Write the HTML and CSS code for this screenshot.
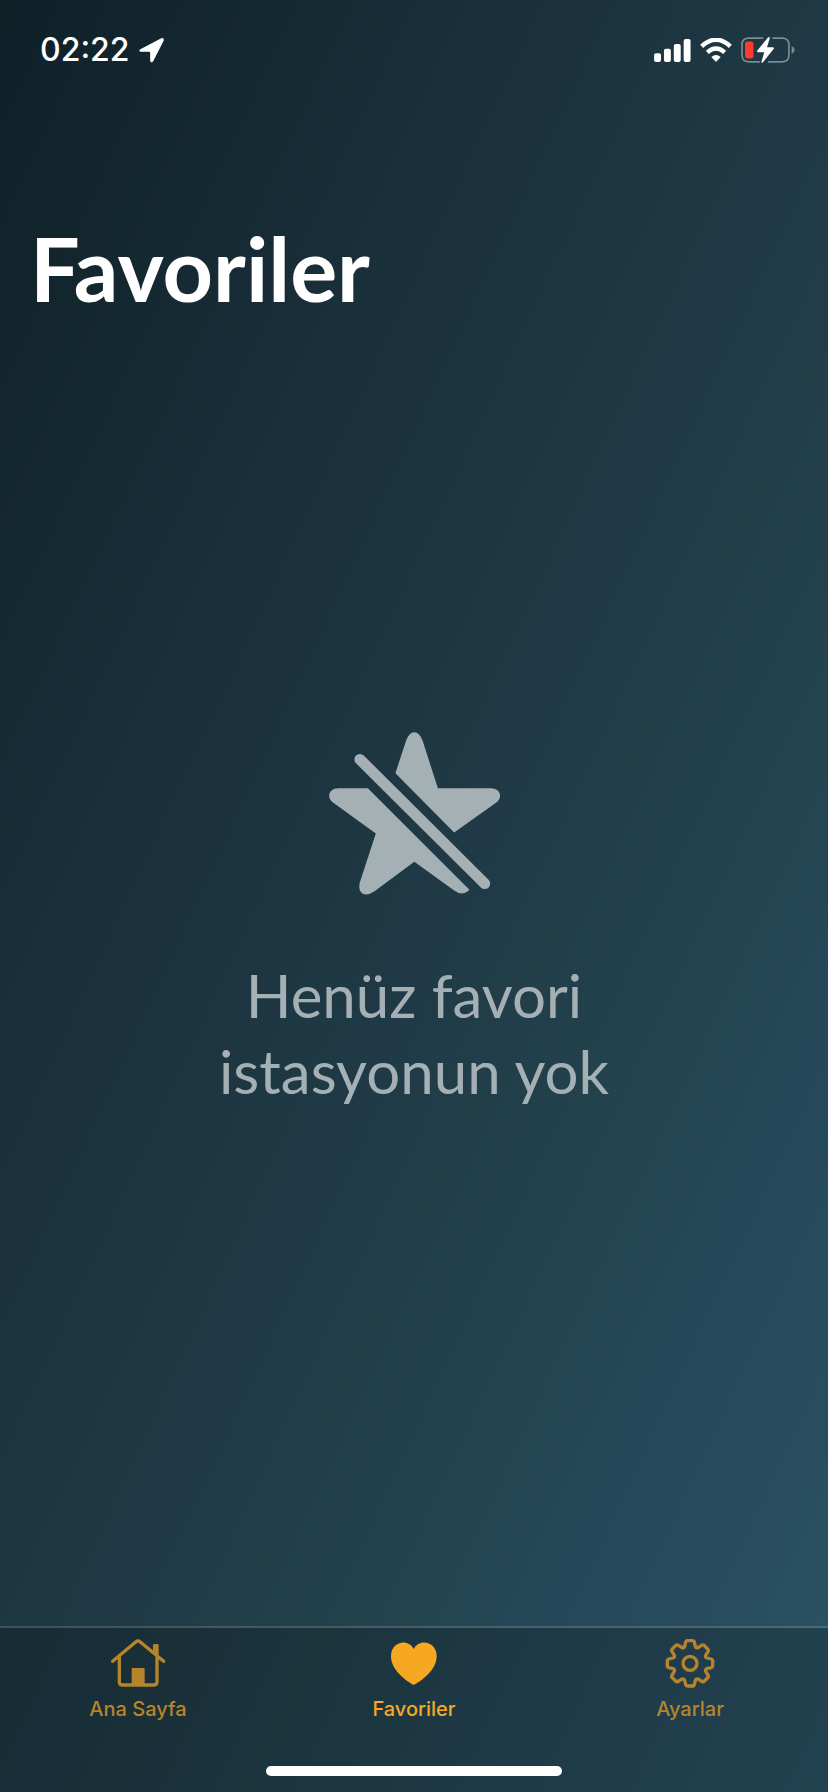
FILE: index.html
```html
<!DOCTYPE html>
<html lang="tr">
<head>
<meta charset="utf-8">
<meta name="viewport" content="width=device-width, initial-scale=1">
<title>Favoriler</title>
<link rel="stylesheet" href="styles.css">
</head>
<body class="screen">
  <header class="status">
    <div class="status-group">
      <time class="clock">02:22</time>
      <svg class="location" viewBox="0 0 74 74" aria-hidden="true"><path d="M4 33L66 1Q75-2 73 8L42 69Q37 76 33 68V44Q33 41 30 41H6Q-3 39 4 33Z"/></svg>
    </div>
    <div class="status-group">
      <svg class="signal" viewBox="0 0 112 70" aria-hidden="true"><rect y="43" width="21" height="27" rx="6"/><rect x="30" y="30" width="21" height="40" rx="6"/><rect x="60" y="15" width="21" height="55" rx="6"/><rect x="90" width="21" height="70" rx="6"/></svg>
      <svg class="wifi" viewBox="0 0 96 72" aria-hidden="true"><path class="wave" d="M5 25Q48-15 91 25M22 43Q48 20 74 43"/><path d="M34 57Q48 45 62 57L50 70Q48 72 46 70Z"/></svg>
      <svg class="battery" viewBox="0 0 160 76" aria-hidden="true"><path class="case" d="M66 3H23Q3 3 3 23V53Q3 73 23 73H56M93 3H122Q142 3 142 23V53Q142 73 122 73H80"/><path class="nub" d="M150 26Q159 30 159 38Q159 46 150 50Z"/><rect class="charge" x="12" y="13" width="25" height="50" rx="8"/><path d="M80 1Q86-3 85 4L77 30H94Q100 31 96 36L65 74Q59 79 61 71L69 45H51Q45 44 49 39Z"/></svg>
    </div>
  </header>

  <main class="content">
    <h1 class="title">Favoriler</h1>
    <section class="empty">
      <svg class="star" viewBox="56 66 515 490" aria-hidden="true"><path d="M173 235H85C55 235 46 264 71 280L197 371L149 518Q141 553 168 555Q178 555 192 546L313 456L432 542Q459 562 479 541Z"/><path d="M256 190L288 92Q297 66 313 66Q329 66 338 92L384 235H545C575 237 578 264 560 278L433 368Z"/><path class="slash" d="M149 148L525 522"/></svg>
      <p class="message">Henüz favori istasyonun yok</p>
    </section>
  </main>

  <nav class="tabs">
    <a class="tab" href="#home">
      <svg class="icon" viewBox="84 60 174 174" aria-hidden="true"><path class="line" d="M95 139L164 81Q171 75 178 81L248 139M115 126V200Q115 210 125 210H218Q228 210 228 200V126"/><path d="M152 212V163Q152 159 156 159H187Q191 159 191 163V212ZM216 114V91Q216 87 220 87H229Q233 87 233 91V128Z"/></svg>
      <span>Ana Sayfa</span>
    </a>
    <a class="tab active" href="#favorites" aria-current="page">
      <svg class="icon" viewBox="104 60 174 174" aria-hidden="true"><path d="M190 210C182 206 122 172 122 124C122 80 173 69 190 102C208 69 259 80 259 124C259 172 199 206 190 210Z"/></svg>
      <span>Favoriler</span>
    </a>
    <a class="tab" href="#settings">
      <svg class="icon" viewBox="-87 -85 174 174" aria-hidden="true"><defs><path id="teeth" d="M-8-68H8Q12-68 13-64L16-51Q18.4-44.3 24.7-47.4L36-54.4Q39.6-56.6 42.4-53.7L53.7-42.4Q56.6-39.6 54.4-36L47.4-24.7Q44.3-18.4 51-16L64-13Q68-12 68-8"/></defs><g class="line"><use href="#teeth"/><use href="#teeth" transform="rotate(90)"/><use href="#teeth" transform="rotate(180)"/><use href="#teeth" transform="rotate(270)"/><circle r="21"/></g></svg>
      <span>Ayarlar</span>
    </a>
    <div class="home-indicator"></div>
  </nav>
</body>
</html>
```
FILE: styles.css
```css
* {
  box-sizing: border-box;
}

.screen {
  margin: 0;
  min-height: 100vh;
  display: flex;
  flex-direction: column;
  color: #fff;
  font-family: Inter, "Liberation Sans", sans-serif;
  background: linear-gradient(to bottom right, #0f2027 0%, #1b323d 35%, #1f3a46 52%, #24444f 70%, #26485a 79%, #2c5364 100%);
}

svg {
  display: block;
  fill: currentColor;
}

.status {
  display: flex;
  justify-content: space-between;
  align-items: center;
  height: 100px;
  padding: 0 33px 0 40px;
}

.status-group {
  display: flex;
  align-items: center;
  gap: 9px;
}

.clock {
  font-size: 32px;
  font-weight: 500;
  line-height: 40px;
}

.location {
  width: 25px;
  height: 25px;
}

.signal {
  width: 37px;
  height: 23px;
}

.wifi {
  width: 32px;
  height: 24px;
}

.wave {
  fill: none;
  stroke: currentColor;
  stroke-width: 13;
}

.battery {
  width: 54px;
  height: 26px;
}

.case {
  fill: none;
  stroke: #7b8b92;
  stroke-width: 5;
}

.nub {
  fill: #7b8b92;
}

.charge {
  fill: #ff3b30;
}

.content {
  flex: 1;
  display: flex;
  flex-direction: column;
  padding: 114px 30px 0;
  font-family: Lato, "Open Sans", sans-serif;
}

.title {
  margin: 0;
  font-size: 88px;
  font-weight: 700;
  line-height: 108px;
}

.empty {
  flex: 1;
  display: flex;
  flex-direction: column;
  align-items: center;
  justify-content: center;
  gap: 62px;
  padding-bottom: 108px;
  color: #a5b0b5;
}

.star {
  width: 171px;
  height: 163px;
}

.slash {
  stroke: currentColor;
  stroke-width: 33;
  stroke-linecap: round;
}

.message {
  margin: 0;
  max-width: 440px;
  font-size: 60px;
  line-height: 76px;
  text-align: center;
}

.tabs {
  display: grid;
  grid-template-columns: repeat(3, 1fr);
  border-top: 2px solid rgba(255, 255, 255, 0.14);
  background: rgba(0, 0, 0, 0.2);
  background-clip: padding-box;
}

.tab {
  display: flex;
  flex-direction: column;
  align-items: center;
  gap: 4px;
  padding-top: 7px;
  color: #b6852b;
  font-size: 20px;
  font-weight: 500;
  line-height: 24px;
  text-decoration: none;
}

.active {
  color: #f7a823;
}

.icon {
  width: 58px;
  height: 58px;
}

.line {
  fill: none;
  stroke: currentColor;
  stroke-width: 10;
  stroke-linecap: round;
  stroke-linejoin: round;
}

.home-indicator {
  grid-column: 1 / -1;
  justify-self: center;
  width: 296px;
  height: 10px;
  margin: 45px 0 16px;
  border-radius: 5px;
  background: #fff;
}
```
